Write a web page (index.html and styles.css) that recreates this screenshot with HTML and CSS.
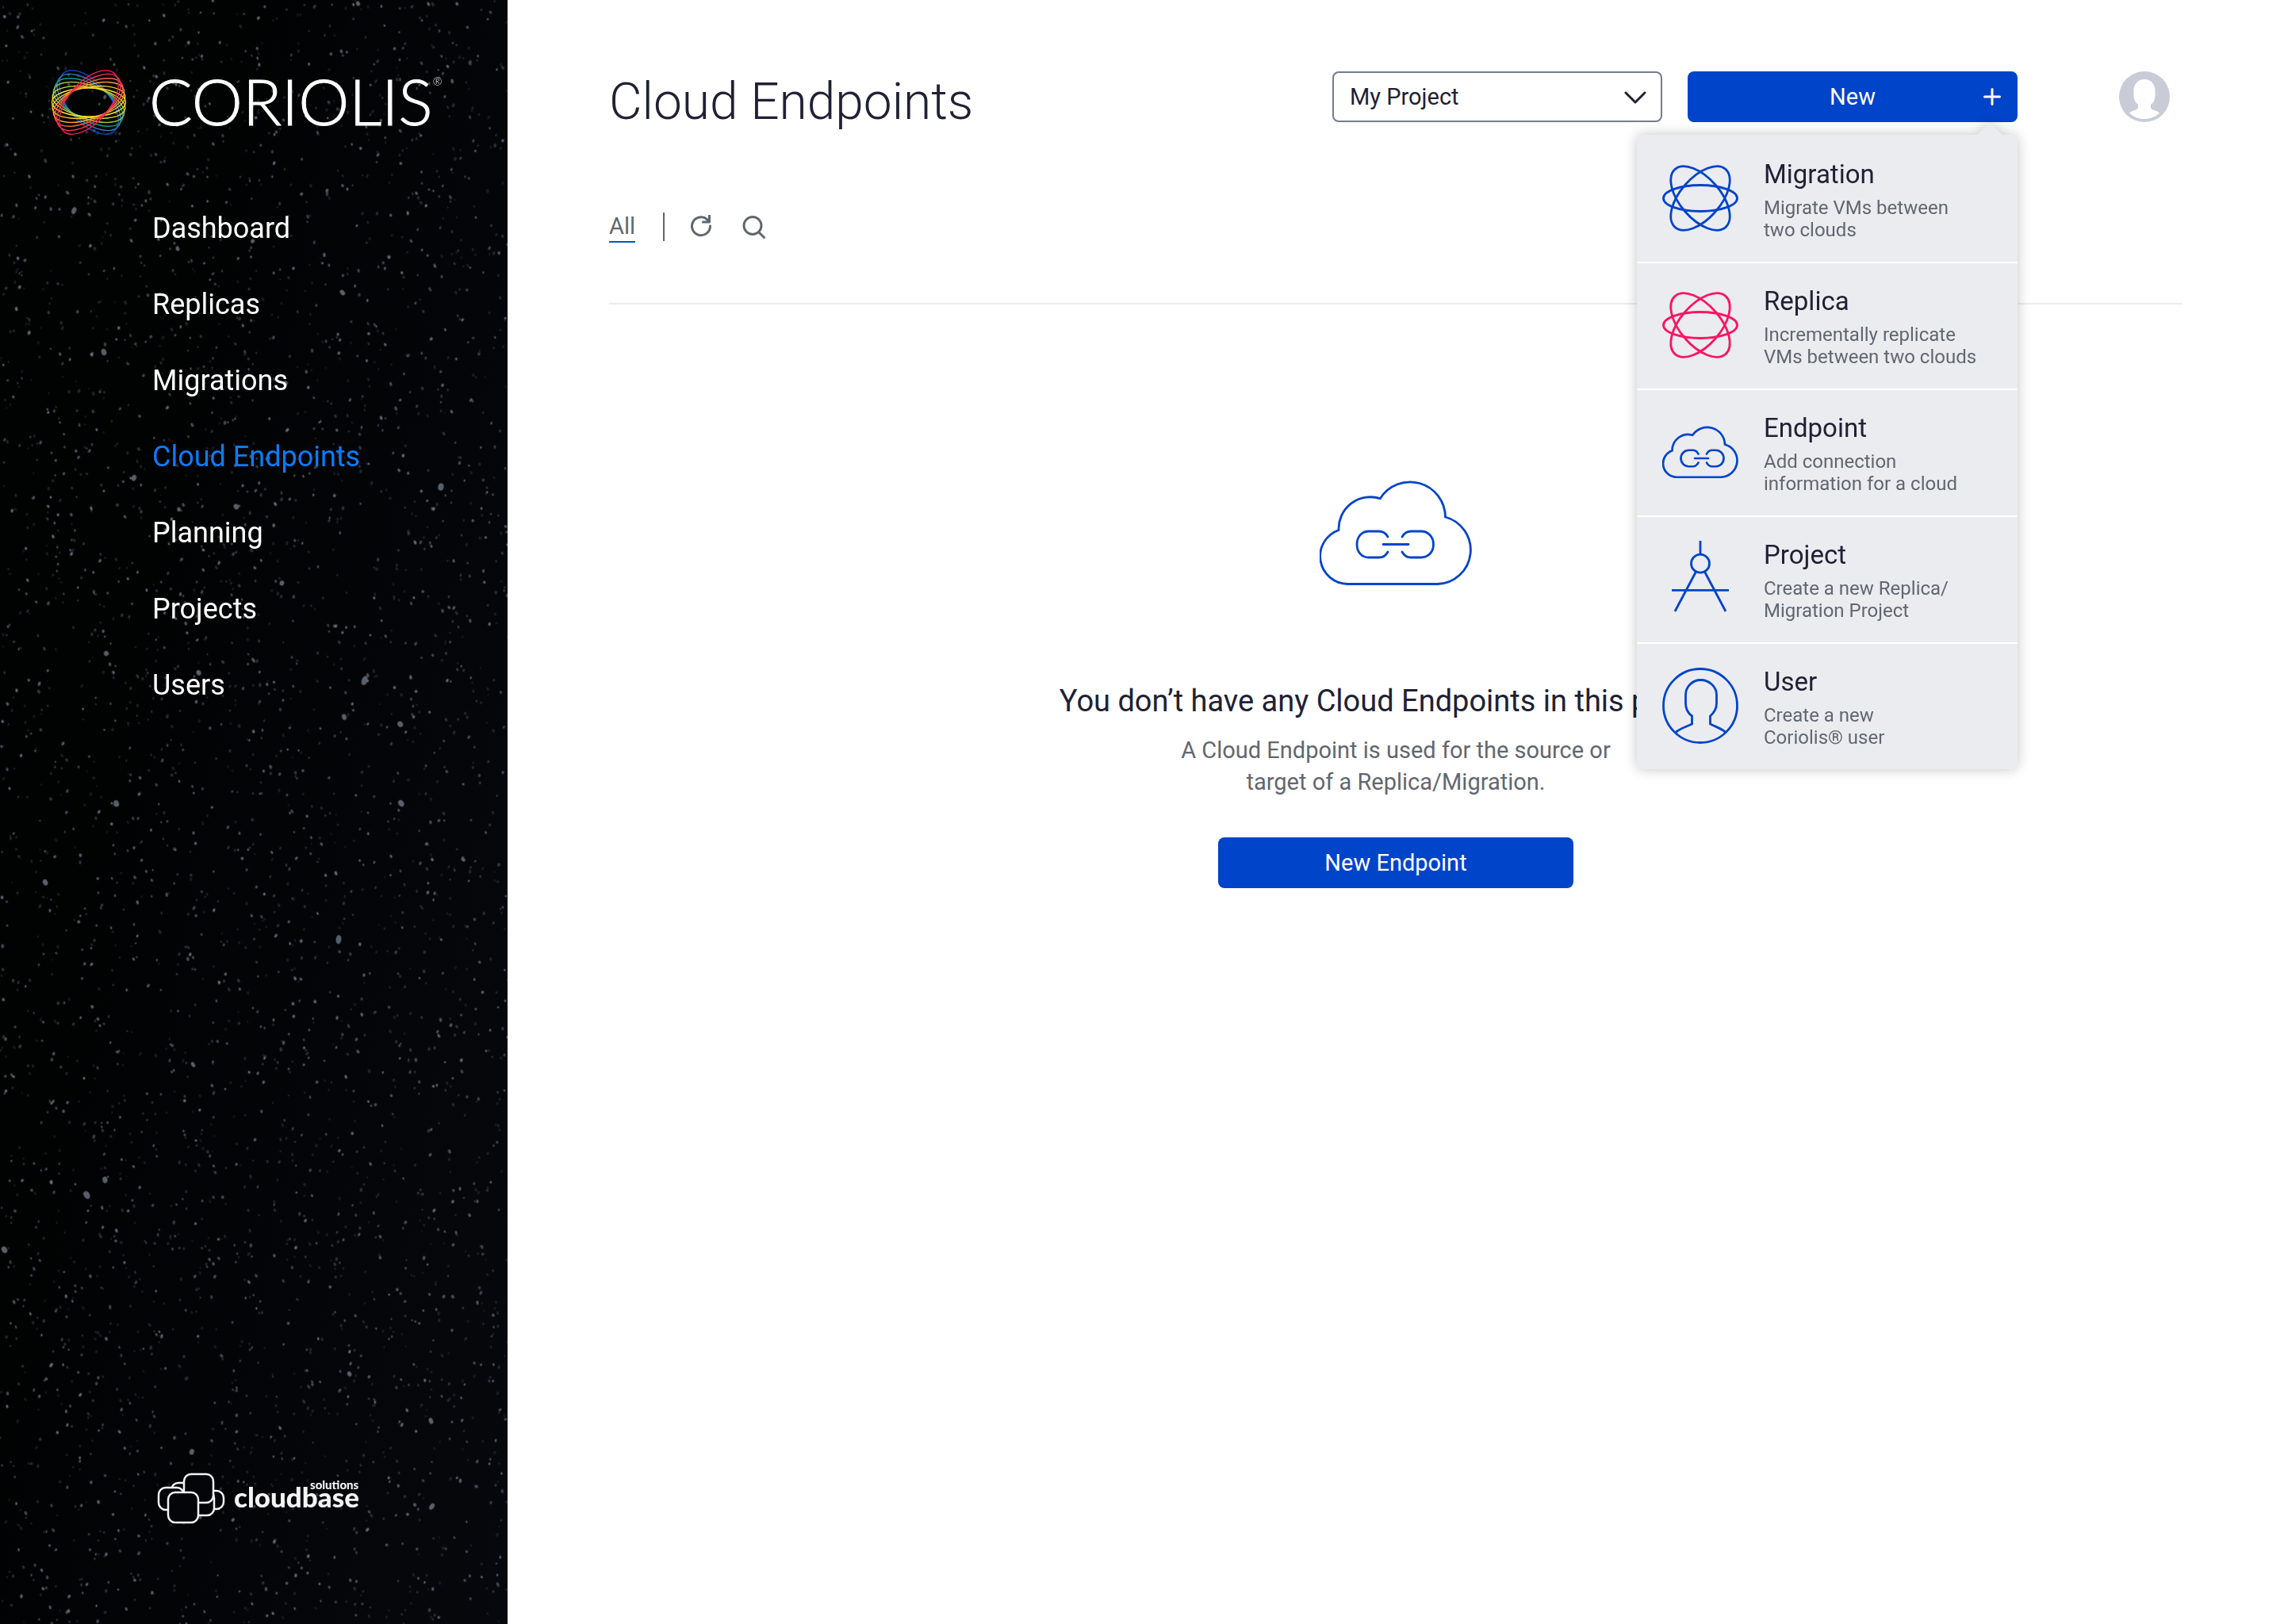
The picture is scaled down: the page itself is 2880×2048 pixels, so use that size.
FILE: index.html
```html
<!DOCTYPE html>
<html lang="en">
<head>
<meta charset="utf-8">
<meta name="viewport" content="width=device-width, initial-scale=1">
<title>Coriolis – Cloud Endpoints</title>
<link rel="stylesheet" href="styles.css">
</head>
<body>
<div class="app">
  <aside class="sidebar">
    <canvas class="stars" id="stars" aria-hidden="true"></canvas>
    <a class="brand" href="#" aria-label="Coriolis">
      <svg class="brand-mark" viewBox="-48 -43 96 86" fill="none" stroke-width="1.4" aria-hidden="true">
        <ellipse rx="48.500" ry="25.500" transform="rotate(49)" stroke="#0b49d0"/>
        <ellipse rx="48" ry="24" transform="rotate(39)" stroke="#2f7cb5"/>
        <ellipse rx="47.500" ry="22.500" transform="rotate(29)" stroke="#1a9a8a"/>
        <ellipse rx="47" ry="21" transform="rotate(20)" stroke="#8fc04a"/>
        <ellipse rx="46.500" ry="19" transform="rotate(10)" stroke="#cfd63a"/>
        <ellipse rx="46.500" ry="18" stroke="#fbe122"/>
        <ellipse rx="46.500" ry="19" transform="rotate(-10)" stroke="#fdc82a"/>
        <ellipse rx="47" ry="21" transform="rotate(-20)" stroke="#fb9a30"/>
        <ellipse rx="47.500" ry="22.500" transform="rotate(-29)" stroke="#f9643a"/>
        <ellipse rx="48" ry="24" transform="rotate(-39)" stroke="#f5304c"/>
        <ellipse rx="48.500" ry="25.500" transform="rotate(-49)" stroke="#f5195f"/>
      </svg>
      <span class="brand-name">CORIOLIS<sup class="brand-reg">®</sup></span>
    </a>
    <nav class="nav" aria-label="Main">
      <a href="#">Dashboard</a>
      <a href="#">Replicas</a>
      <a href="#">Migrations</a>
      <a href="#" class="active" aria-current="page">Cloud Endpoints</a>
      <a href="#">Planning</a>
      <a href="#">Projects</a>
      <a href="#">Users</a>
    </nav>
    <a class="vendor" href="#" aria-label="Cloudbase Solutions">
      <svg viewBox="0 0 260 68" fill="#040508" stroke="#f4f4f4" stroke-width="2.5">
        <rect x="58" y="24" width="26" height="23" rx="9"/>
        <rect x="38" y="24" width="34" height="31" rx="9"/>
        <rect x="18" y="14" width="24" height="24" rx="9"/>
        <rect x="34" y="3" width="37" height="36" rx="9"/>
        <rect x="2" y="20" width="32" height="28" rx="9"/>
        <rect x="14" y="26" width="38" height="38" rx="9"/>
        <text class="vendor-name" x="97" y="45">cloudbase</text>
        <text class="vendor-sub" x="193" y="22">solutions</text>
      </svg>
    </a>
  </aside>

  <main class="main">
    <header class="topbar">
      <h1>Cloud Endpoints</h1>
      <div class="project">
        <select aria-label="Project">
          <option>My Project</option>
        </select>
        <svg class="chevron" viewBox="0 0 28 16" fill="none" stroke="#202134" stroke-width="3" stroke-linecap="round" stroke-linejoin="round" aria-hidden="true"><path d="M2 2L14 14L26 2"/></svg>
      </div>
      <div class="create">
        <button class="btn btn-new" type="button" aria-expanded="true">New
          <svg class="plus" viewBox="0 0 22 22" stroke="#fff" stroke-width="3" stroke-linecap="round" aria-hidden="true"><path d="M11 1.500V20.500M1.500 11H20.500"/></svg>
        </button>
        <div class="menu">
          <a class="menu-item" href="#">
            <svg class="menu-icon" viewBox="-48 -48 96 96" fill="none" stroke="#0044ca" stroke-width="2.800" aria-hidden="true"><ellipse rx="46.500" ry="16.500"/><ellipse rx="48.500" ry="25.500" transform="rotate(49)"/><ellipse rx="48.500" ry="25.500" transform="rotate(-49)"/></svg>
            <span class="menu-text"><span class="menu-title">Migration</span><span class="menu-desc">Migrate VMs between<br>two clouds</span></span>
          </a>
          <a class="menu-item" href="#">
            <svg class="menu-icon" viewBox="-48 -48 96 96" fill="none" stroke="#f91661" stroke-width="2.800" aria-hidden="true"><ellipse rx="46.500" ry="16.500"/><ellipse rx="48.500" ry="25.500" transform="rotate(49)"/><ellipse rx="48.500" ry="25.500" transform="rotate(-49)"/></svg>
            <span class="menu-text"><span class="menu-title">Replica</span><span class="menu-desc">Incrementally replicate<br>VMs between two clouds</span></span>
          </a>
          <a class="menu-item" href="#">
            <svg class="menu-icon" viewBox="0 -30 192 192" fill="none" stroke="#0044ca" stroke-width="5.400" stroke-linecap="round" aria-hidden="true"><path d="M36 129.500A34.500 34.500 0 0 1 25 62.500A40 40 0 0 1 76.500 23.500A44.500 44.500 0 0 1 158 47A42 42 0 0 1 148 129.500Z" stroke-linecap="butt"/><path d="M91 71C88 65 83 61.500 77 61.500H67C55 61.500 47 71 47 82S55 102.500 67 102.500H77C83 102.500 88 99 91 93M112 71C115 65 120 61.500 126 61.500H135C147 61.500 155 71 155 82S147 102.500 135 102.500H126C120 102.500 115 99 112 93M82 82H116"/></svg>
            <span class="menu-text"><span class="menu-title">Endpoint</span><span class="menu-desc">Add connection<br>information for a cloud</span></span>
          </a>
          <a class="menu-item" href="#">
            <svg class="menu-icon" viewBox="0 0 96 96" fill="none" stroke="#0044ca" stroke-width="2.800" aria-hidden="true"><circle cx="48" cy="28.700" r="11.500"/><path d="M48 0V17M12 62.300H84M42.500 39L16 89M53.500 39L80 89"/></svg>
            <span class="menu-text"><span class="menu-title">Project</span><span class="menu-desc">Create a new Replica/<br>Migration Project</span></span>
          </a>
          <a class="menu-item" href="#">
            <svg class="menu-icon" viewBox="0 0 96 96" fill="none" stroke="#0044ca" stroke-width="2.800" aria-hidden="true"><circle cx="48" cy="48" r="46.500"/><path d="M16.500 82C22 76.500 30 75 37.500 71V61C32 57 29.500 51 29.500 45V34.500C29.500 24 38 15.500 48.500 15.500S68.500 24 68.500 34.500V45C68.500 52 65 57 60.500 61V71C68 75 75 76.500 80.500 82"/></svg>
            <span class="menu-text"><span class="menu-title">User</span><span class="menu-desc">Create a new<br>Coriolis® user</span></span>
          </a>
        </div>
      </div>
      <button class="avatar" type="button" aria-label="Account">
        <svg viewBox="0 0 64 64" aria-hidden="true"><circle cx="32" cy="32" r="32" fill="#c8ccd7"/><path fill="#fff" d="M32 10C24 10 18.500 16 18.500 24V30C18.500 36 20.500 39 24 42V45C24 48 21 48.500 18 49.500C15.500 50.300 14 51.500 13 52.500C18 57.500 25 60 32 60S46 57.500 51 52.500C50 51.500 48.500 50.300 46 49.500C43 48.500 40 48 40 45V42C43.500 39 45.500 36 45.500 30V24C45.500 16 40 10 32 10Z"/></svg>
      </button>
    </header>

    <div class="filters">
      <a class="filter-all" href="#">All</a>
      <span class="divider"></span>
      <button class="icon-btn" type="button" aria-label="Reload">
        <svg viewBox="0 0 30 30" fill="none" stroke="#616770" stroke-width="3" stroke-linecap="round" stroke-linejoin="round" aria-hidden="true"><path d="M25.500 14A11.500 11.500 0 1 1 21.500 5.500L24 8.500M24.500 1V9H16.500"/></svg>
      </button>
      <button class="icon-btn" type="button" aria-label="Search">
        <svg viewBox="0 0 30 30" fill="none" stroke="#616770" stroke-width="3" stroke-linecap="round" aria-hidden="true"><circle cx="13" cy="13.500" r="11"/><path d="M21 22L27.500 28.500"/></svg>
      </button>
    </div>

    <section class="empty">
      <svg class="empty-icon" viewBox="0 0 192 132" fill="none" stroke="#0044ca" stroke-width="2.800" stroke-linecap="round" aria-hidden="true"><path stroke-linecap="butt" d="M36 130.500A35 35 0 0 1 24 62.500A40 40 0 0 1 76.300 22.700A44.500 44.500 0 0 1 158.500 46A43 43 0 0 1 149 130.500Z"/><path d="M86 71C83.500 66.500 79.500 64 75 64H62C53 64 47 71 47 80.500S53 97 62 97H75C79.500 97 83.500 94.500 86 90M104 71C106.500 66.500 110.500 64 115 64H128C137 64 143.500 71 143.500 80.500S137 97 128 97H115C110.500 97 106.500 94.500 104 90M80 80.500H112"/></svg>
      <h2>You don’t have any Cloud Endpoints in this project.</h2>
      <p>A Cloud Endpoint is used for the source or<br>target of a Replica/Migration.</p>
      <button class="btn btn-endpoint" type="button">New Endpoint</button>
    </section>
  </main>
</div>
<script src="stars.js"></script>
</body>
</html>
```
FILE: styles.css
```css
* {
  box-sizing: border-box;
}

body {
  margin: 0;
  background: #fff;
  color: #202134;
  font-family: Roboto, "Liberation Sans", sans-serif;
  font-size: 29px;
}

a {
  color: inherit;
  text-decoration: none;
}

button,
select {
  font: inherit;
  border: 0;
  padding: 0;
  background: none;
  cursor: pointer;
}

svg {
  display: block;
}

.app {
  display: flex;
  min-height: 100vh;
}

/* Sidebar */

.sidebar {
  position: relative;
  flex: 0 0 640px;
  min-width: 0;
  display: flex;
  flex-direction: column;
  padding: 72px 64px 124px;
  background: linear-gradient(100deg, #010202 30%, #06080d 100%);
  color: #fff;
}

.stars {
  position: absolute;
  inset: 0;
  width: 100%;
  height: 100%;
}

.brand,
.nav,
.vendor {
  position: relative;
}

.brand {
  display: flex;
  align-items: center;
  gap: 28px;
  height: 114px;
}

.brand-mark {
  flex: none;
  width: 96px;
  height: 86px;
}

.brand-name {
  display: flex;
  font-family: Lato, "Liberation Sans", sans-serif;
  font-weight: 300;
  font-size: 81px;
  line-height: 104px;
  padding-bottom: 4px;
  -webkit-text-stroke: 1px #fff;
}

.brand-reg {
  font-size: 14px;
  line-height: 56px;
  -webkit-text-stroke: 0;
}

.nav {
  display: flex;
  flex-direction: column;
  margin-top: 54px;
  padding-left: 128px;
  font-size: 36px;
  line-height: 96px;
}

.nav .active {
  color: #0a7cff;
}

.vendor {
  margin: auto 0 0 134px;
}

.vendor svg {
  width: 260px;
  height: 68px;
}

.vendor text {
  fill: #f4f4f4;
  stroke: none;
  font-family: Lato, "Liberation Sans", sans-serif;
  font-weight: 900;
}

.vendor-name {
  font-size: 35px;
}

.vendor-sub {
  font-size: 15px;
}

/* Main column */

.main {
  flex: 1;
  min-width: 0;
  padding: 90px 128px;
}

.topbar {
  display: flex;
  align-items: flex-start;
  padding-right: 16px;
}

h1 {
  margin: 0 auto 0 0;
  font-weight: 300;
  font-size: 64px;
  line-height: 78px;
}

.project {
  position: relative;
  flex: 0 0 416px;
  margin-right: 32px;
}

.project select {
  width: 100%;
  height: 64px;
  padding: 0 20px;
  border: 2px solid #767b8f;
  border-radius: 8px;
  appearance: none;
  color: #202134;
}

.chevron {
  position: absolute;
  right: 20px;
  top: 25px;
  width: 28px;
  height: 16px;
  pointer-events: none;
}

.btn {
  position: relative;
  height: 64px;
  border-radius: 8px;
  background: #0044ca;
  color: #fff;
}

.create {
  position: relative;
  flex: 0 0 416px;
  margin-right: 128px;
}

.btn-new {
  width: 100%;
}

.plus {
  position: absolute;
  right: 21px;
  top: 21px;
  width: 22px;
  height: 22px;
}

.avatar,
.avatar svg {
  width: 64px;
  height: 64px;
}

/* Creation menu */

.menu {
  position: absolute;
  z-index: 2;
  top: 80px;
  right: 0;
  width: 480px;
  border-radius: 8px;
  background: #ebecf0;
  filter: drop-shadow(0 0 8px rgba(0, 10, 0, 0.24));
}

.menu::before {
  content: "";
  position: absolute;
  right: 19px;
  bottom: 100%;
  border: 16px solid transparent;
  border-top: 0;
  border-bottom-color: #ebecf0;
}

.menu-item {
  display: flex;
  align-items: center;
  gap: 32px;
  height: 160px;
  padding-left: 32px;
}

.menu-item + .menu-item {
  border-top: 2px solid #fff;
  padding-bottom: 2px;
}

.menu-icon {
  flex: none;
  width: 96px;
  height: 96px;
}

.menu-text {
  display: flex;
  flex-direction: column;
  gap: 10px;
  padding-top: 5px;
}

.menu-title {
  font-size: 33px;
  line-height: 36px;
}

.menu-desc {
  color: #616770;
  font-size: 24px;
  line-height: 28px;
}

/* Filters */

.filters {
  display: flex;
  align-items: center;
  height: 130px;
  margin-top: 86px;
  padding-bottom: 64px;
  border-bottom: 2px solid #ebecf0;
  color: #616770;
}

.filter-all {
  padding-bottom: 1px;
  border-bottom: 2px solid #0058c0;
  line-height: 36px;
}

.divider {
  width: 2px;
  height: 36px;
  margin: 0 32px 0 35px;
  background: #616770;
}

.icon-btn {
  width: 30px;
  height: 30px;
  margin-right: 36px;
}

/* Empty state */

.empty {
  display: flex;
  flex-direction: column;
  align-items: center;
  padding-top: 222px;
  text-align: center;
}

.empty-icon {
  width: 192px;
  height: 132px;
}

h2 {
  margin: 122px 0 0;
  font-weight: 400;
  font-size: 38px;
  line-height: 48px;
}

p {
  margin: 18px 0 0;
  color: #616770;
  line-height: 40px;
}

.btn-endpoint {
  width: 448px;
  margin-top: 50px;
}
```
FILE: stars.js
```js
// Paints the sidebar's night sky from a fixed seed, so it is the same on each load.
(function () {
  const canvas = document.getElementById("stars");
  const ctx = canvas.getContext("2d");

  function generator(seed) {
    return function () {
      seed = (seed + 0x6d2b79f5) | 0;
      let t = Math.imul(seed ^ (seed >>> 15), 1 | seed);
      t = (t + Math.imul(t ^ (t >>> 7), 61 | t)) ^ t;
      return ((t ^ (t >>> 14)) >>> 0) / 4294967296;
    };
  }

  function paint() {
    const w = (canvas.width = canvas.clientWidth);
    const h = (canvas.height = canvas.clientHeight);
    const rnd = generator(20177);
    const dot = (x, y, rx, ry, turn, alpha) => {
      ctx.fillStyle = "rgba(125, 136, 152, " + alpha + ")";
      ctx.beginPath();
      ctx.ellipse(x, y, rx, ry, turn, 0, Math.PI * 2);
      ctx.fill();
    };
    const count = Math.round((w * h) / 350);
    for (let i = 0; i < count; i++) {
      const x = rnd() * w;
      const y = rnd() * h;
      const size = rnd();
      const big = rnd() > 0.992;
      const rx = big ? 1.8 + size * 1.6 : 0.7 + size * 0.8;
      const ry = rx * (1 + rnd() * 0.7);
      const turn = (rnd() - 0.5) * 1.4;
      const alpha = big ? 0.6 : 0.12 + Math.pow(rnd(), 2) * 0.55;
      dot(x, y, rx + 1, ry + 1, turn, alpha * 0.4);
      dot(x, y, rx, ry, turn, alpha);
    }
  }

  paint();
  window.addEventListener("resize", paint);
})();
```
